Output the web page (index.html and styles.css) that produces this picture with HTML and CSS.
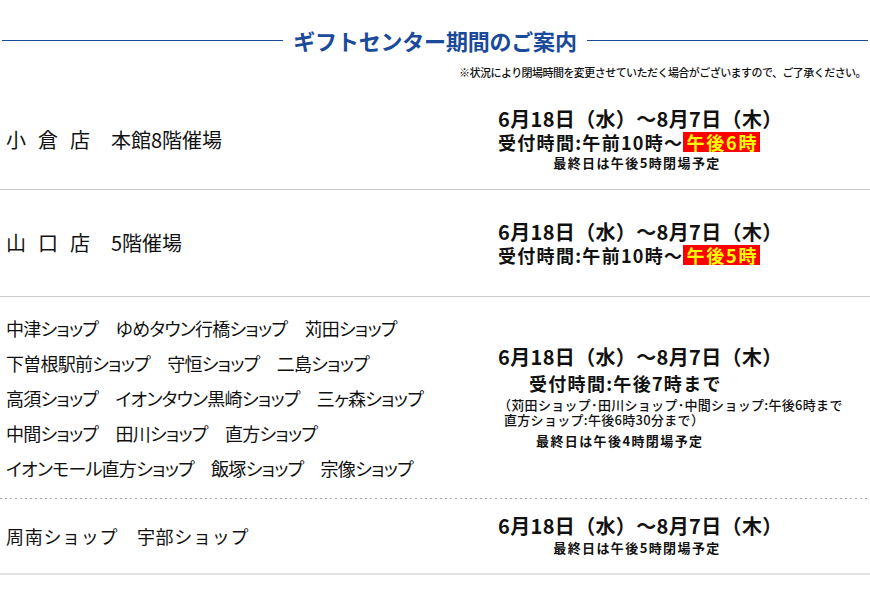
FILE: index.html
```html
<!DOCTYPE html>
<html lang="ja">
<head>
<meta charset="utf-8">
<title>ギフトセンター期間のご案内</title>
<link rel="stylesheet" href="styles.css">
</head>
<body>
<div class="page">
  <div class="heading">
    <span class="rule"></span>
    <h1 class="title">ギフトセンター期間のご案内</h1>
    <span class="rule"></span>
  </div>
  <p class="note">※状況により閉場時間を変更させていただく場合がございますので、ご了承ください。</p>

  <div class="row row-1">
    <div class="place"><span class="store">小倉店</span><span>本館8階催場</span></div>
    <div class="info">
      <div class="date">6月18日（水）～8月7日（木）</div>
      <div class="hours">受付時間:午前10時～<span class="hl">午後6時</span></div>
      <div class="last">最終日は午後5時閉場予定</div>
    </div>
  </div>

  <div class="row row-2">
    <div class="place"><span class="store">山口店</span><span>5階催場</span></div>
    <div class="info">
      <div class="date">6月18日（水）～8月7日（木）</div>
      <div class="hours">受付時間:午前10時～<span class="hl">午後5時</span></div>
    </div>
  </div>

  <div class="row row-3">
    <div class="place shops">
      <div>中津ショップ　ゆめタウン行橋ショップ　苅田ショップ</div>
      <div>下曽根駅前ショップ　守恒ショップ　二島ショップ</div>
      <div>高須ショップ　イオンタウン黒崎ショップ　三ヶ森ショップ</div>
      <div>中間ショップ　田川ショップ　直方ショップ</div>
      <div>イオンモール直方ショップ　飯塚ショップ　宗像ショップ</div>
    </div>
    <div class="info">
      <div class="date">6月18日（水）～8月7日（木）</div>
      <div class="hours hours-indent">受付時間:午後7時まで</div>
      <div class="sub">（苅田ショップ･田川ショップ･中間ショップ:午後6時まで</div>
      <div class="sub sub-2">直方ショップ:午後6時30分まで）</div>
      <div class="last last-left">最終日は午後4時閉場予定</div>
    </div>
  </div>

  <div class="row row-4">
    <div class="place shops-short">周南ショップ　宇部ショップ</div>
    <div class="info">
      <div class="date">6月18日（水）～8月7日（木）</div>
      <div class="last">最終日は午後5時閉場予定</div>
    </div>
  </div>
</div>
</body>
</html>
```

FILE: styles.css
```css
* {
  box-sizing: border-box;
}

html, body {
  margin: 0;
  padding: 0;
  background: #ffffff;
}

body {
  font-family: "Noto Sans CJK JP", "Noto Sans", sans-serif;
  color: #111111;
}

.page {
  width: 870px;
}

.heading {
  display: flex;
  align-items: center;
  gap: 10px;
  height: 30px;
  margin-top: 25px;
  padding: 0 2px;
}

.rule {
  flex: 1;
  height: 1px;
  background: #1a4a9a;
}

.title {
  margin: 0;
  font-size: 22px;
  font-weight: 700;
  line-height: 30px;
  color: #1a4a9a;
  letter-spacing: -0.2px;
}

.note {
  margin: 10px 0 0;
  height: 14px;
  font-size: 11px;
  line-height: 14px;
  text-align: right;
  padding-right: 4px;
  letter-spacing: -0.55px;
  font-weight: 500;
}

.row {
  display: flex;
  align-items: center;
  padding-left: 6px;
}

.row-1 {
  margin-top: 12px;
  height: 99px;
  border-bottom: 1px solid #cccccc;
}

.row-2 {
  height: 107px;
  border-bottom: 1px solid #cccccc;
}

.row-3 {
  height: 202px;
  background: repeating-linear-gradient(to right, #aaaaaa 0 2px, transparent 2px 5px) left bottom / 100% 1px no-repeat;
}

.row-4 {
  height: 76px;
  border-bottom: 2px solid #e3e3e3;
}

.place {
  width: 492px;
  font-size: 20px;
  line-height: 24px;
  font-feature-settings: "palt";
}

.store {
  letter-spacing: 12px;
  margin-right: 9px;
}

.shops {
  font-size: 18px;
  line-height: 35px;
  padding-top: 1px;
  letter-spacing: -0.75px;
}

.shops-short {
  font-size: 18px;
  font-feature-settings: normal;
  letter-spacing: 0.7px;
}

.info {
  width: 282px;
}

.date {
  font-size: 20px;
  font-weight: 700;
  line-height: 24px;
  letter-spacing: 0.35px;
}

.hours {
  font-size: 18px;
  font-weight: 700;
  line-height: 22px;
  letter-spacing: 1.3px;
}

.hours-indent {
  padding-left: 31px;
  margin-top: 3px;
}

.hl {
  display: inline-block;
  vertical-align: top;
  margin-top: 1px;
  background: #ff0000;
  color: #ffff00;
  line-height: 20px;
  padding: 0 2px 0 3px;
  letter-spacing: 1.8px;
}

.last {
  font-size: 13px;
  font-weight: 700;
  line-height: 20px;
  text-align: center;
  letter-spacing: 1.4px;
  padding-right: 4px;
}

.last-left {
  text-align: left;
  padding-left: 38px;
  margin-top: 4px;
}

.sub {
  font-size: 13px;
  font-weight: 500;
  line-height: 15px;
  margin-top: 3px;
  white-space: nowrap;
  letter-spacing: 0.3px;
}

.sub-2 {
  margin-top: 0;
  padding-left: 6px;
}
```
